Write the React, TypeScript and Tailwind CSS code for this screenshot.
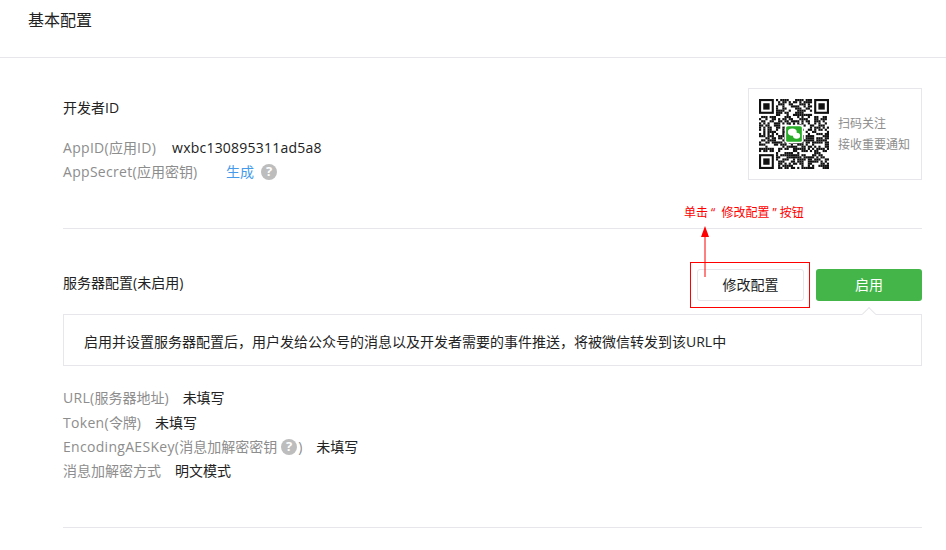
import { useMemo } from "react";

const font = "font-['Open_Sans','Noto_Sans_CJK_SC',sans-serif]";

function QrCode() {
  const size = 33;
  const cells = useMemo(() => {
    const out: { x: number; y: number }[] = [];
    let seed = 7341;
    const inFinder = (x: number, y: number) =>
      (x < 8 && y < 8) || (x >= size - 8 && y < 8) || (x < 8 && y >= size - 8);
    for (let y = 0; y < size; y++) {
      for (let x = 0; x < size; x++) {
        seed = (seed * 1103515245 + 12345) & 0x7fffffff;
        if (!inFinder(x, y) && (seed >> 16) % 100 < 55) out.push({ x, y });
      }
    }
    return out;
  }, []);

  const finder = (x: number, y: number) => (
    <g key={`${x}-${y}`}>
      <rect x={x} y={y} width={7} height={7} fill="#111" />
      <rect x={x + 1} y={y + 1} width={5} height={5} fill="#fff" />
      <rect x={x + 2} y={y + 2} width={3} height={3} fill="#111" />
    </g>
  );

  return (
    <svg width="70" height="70" viewBox={`0 0 ${size} ${size}`}>
      {cells.map((c) => (
        <rect key={`${c.x}-${c.y}`} x={c.x} y={c.y} width={1.02} height={1.02} fill="#111" />
      ))}
      {finder(0, 0)}
      {finder(size - 7, 0)}
      {finder(0, size - 7)}
      <rect x="12.2" y="12.2" width="8.6" height="8.6" rx="1" fill="#fff" />
      <rect x="12.8" y="12.8" width="7.4" height="7.4" rx="0.8" fill="#2aae2a" />
      <ellipse cx="15.7" cy="15.6" rx="2.1" ry="1.7" fill="#fff" />
      <ellipse cx="17.7" cy="17.3" rx="1.7" ry="1.4" fill="#fff" />
    </svg>
  );
}

function Help() {
  return (
    <span className="inline-flex h-4 w-4 items-center justify-center rounded-full bg-[#bdbdbd] text-[13px] leading-none font-bold text-white">
      ?
    </span>
  );
}

// latin runs are a little wider in the reference than Open Sans
function Lat({ children }: { children: React.ReactNode }) {
  return <span className="tracking-[0.3px]">{children}</span>;
}

function Row({ label, children }: { label: React.ReactNode; children: React.ReactNode }) {
  return (
    <div className="flex h-[24.4px] items-center">
      <span className="text-[#8d8d8d]">{label}</span>
      {children}
    </div>
  );
}

export default function App() {
  return (
    <div className={`relative h-[550px] w-[946px] overflow-hidden bg-white text-sm text-[#222] ${font}`}>
      <div className="h-[58px] border-b border-[#e7e7eb] pt-[9px] pl-[28px] text-base leading-[22px]">
        基本配置
      </div>

      <div className="mr-6 ml-[63px]">
        <div className="flex h-[171px] justify-between border-b border-[#e7e7eb] pt-[30px]">
          <div>
            <div className="mt-[9px] leading-[22px]">开发者ID</div>
            <div className="mt-[17px]">
              <Row
                label={
                  <>
                    <Lat>AppID(</Lat>应用<Lat>ID)</Lat>
                  </>
                }
              >
                <span className="ml-4 tracking-[0.22px] text-[#222]">wxbc130895311ad5a8</span>
              </Row>
              <div className="-mt-[1px]">
                <Row
                  label={
                    <>
                      <Lat>AppSecret(</Lat>应用密钥)
                    </>
                  }
                >
                  <span className="ml-[29px] text-[#459ae9]">生成</span>
                  <span className="ml-[7px] flex">
                    <Help />
                  </span>
                </Row>
              </div>
            </div>
          </div>
          <div className="flex h-[92px] w-[174px] items-center border border-[#e7e7eb] pl-[10px]">
            <QrCode />
            <div className="ml-[9px] text-xs leading-[21px] text-[#8d8d8d]">
              <div>扫码关注</div>
              <div>接收重要通知</div>
            </div>
          </div>
        </div>

        <div className="mt-10 flex justify-between">
          <span className="leading-[28px]">服务器配置(未启用)</span>
          <div className="flex gap-3">
            <button className="h-8 w-[107px] rounded-[3px] border border-[#e7e7eb] bg-white text-[#222]">修改配置</button>
            <button className="h-8 w-[106px] rounded-[3px] bg-[#44b549] text-white">启用</button>
          </div>
        </div>

        <div className="relative mt-[13px] flex h-[52px] items-center border border-[#e7e7eb] pt-1 pl-5">
          启用并设置服务器配置后，用户发给公众号的消息以及开发者需要的事件推送，将被微信转发到该URL中
          <span className="absolute -top-[6px] left-[800px] h-[10px] w-[10px] rotate-45 border-t border-l border-[#e7e7eb] bg-white" />
        </div>

        <div className="mt-5 h-[142px] border-b border-[#e7e7eb]">
          <Row
            label={
              <>
                <Lat>URL(</Lat>服务器地址)
              </>
            }
          >
            <span className="ml-[14px]">未填写</span>
          </Row>
          <Row
            label={
              <>
                <Lat>Token(</Lat>令牌)
              </>
            }
          >
            <span className="ml-[14px]">未填写</span>
          </Row>
          <Row
            label={
              <span className="flex items-center">
                <Lat>EncodingAESKey(</Lat>消息加解密密钥
                <span className="mr-[1px] ml-1 flex">
                  <Help />
                </span>
                )
              </span>
            }
          >
            <span className="ml-[14px]">未填写</span>
          </Row>
          <Row label="消息加解密方式">
            <span className="ml-[14px]">明文模式</span>
          </Row>
        </div>
      </div>

      {/* red annotation drawn over the page */}
      <div className="absolute top-[206px] left-[684px] text-xs leading-[14px] whitespace-pre text-[#f00]">
        单击 “ <span className="ml-[3px]">修改配置</span> ” 按钮
      </div>
      <div className="absolute top-[262px] left-[690px] h-[46px] w-[120px] border border-[#f00]" />
      <svg className="absolute top-[226px] left-[699px]" width="12" height="52" viewBox="0 0 12 52">
        <path d="M6 0 L10 11 L2 11 Z" fill="#f00" />
        <path d="M6 8 V51" stroke="#f00" strokeWidth="1" fill="none" />
      </svg>
    </div>
  );
}
